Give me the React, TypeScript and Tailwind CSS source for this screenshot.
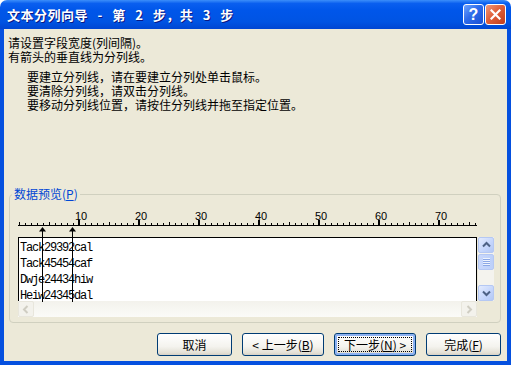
import React from 'react';

// Title bar buttons
const HelpButton = () => (
  <div className="flex h-[21px] w-[21px] items-center justify-center rounded-[3px] border border-white bg-[linear-gradient(135deg,#6FA4FF_0%,#2D6BEA_45%,#1A4FD4_100%)]">
    <span className="font-['Liberation_Sans',sans-serif] text-[16px] font-bold leading-none text-white">?</span>
  </div>
);

const CloseButton = () => (
  <div className="flex h-[21px] w-[21px] items-center justify-center rounded-[3px] border border-white bg-[linear-gradient(135deg,#F0997A_0%,#E0603A_45%,#C23D1C_100%)]">
    <svg width="11" height="11" viewBox="0 0 11 11">
      <path d="M1.5 1.5 L9.5 9.5 M9.5 1.5 L1.5 9.5" stroke="white" strokeWidth={2.2} strokeLinecap="square" />
    </svg>
  </div>
);

// Scrollbar bits
const Chevron = ({ dir, color }: { dir: 'up' | 'down' | 'left' | 'right'; color: string }) => {
  const d = {
    up: 'M1 5.5 L4.5 2 L8 5.5',
    down: 'M1 2.5 L4.5 6 L8 2.5',
    left: 'M5.5 1 L2 4.5 L5.5 8',
    right: 'M2.5 1 L6 4.5 L2.5 8',
  }[dir];
  return (
    <svg width="9" height="9" viewBox="0 0 9 9">
      <path d={d} fill="none" stroke={color} strokeWidth={2} />
    </svg>
  );
};

const ScrollBtn = ({ dir }: { dir: 'up' | 'down' }) => (
  <div className="flex h-[16px] w-[16px] items-center justify-center rounded-[2px] border border-[#B5C8F3] bg-[linear-gradient(to_bottom_right,#E3EBFE_0%,#C4D5FC_60%,#B3C8F5_100%)]">
    <Chevron dir={dir} color="#4D6185" />
  </div>
);

const DisabledBtn = ({ dir }: { dir: 'left' | 'right' }) => (
  <div className="flex h-[16px] w-[16px] items-center justify-center rounded-[2px] border border-[#E8E6DC] bg-[#F3F2EC]">
    <Chevron dir={dir} color="#CFCDC2" />
  </div>
);

// Column ruler
function Ruler() {
  const ticks: React.ReactNode[] = [];
  for (let p = 0; p <= 76; p++) {
    const x = 1 + 6 * p;
    if (p % 10 === 0 && p > 0) ticks.push(<rect key={p} x={x - 1} y={14} width={2} height={5} />);
    else if (p % 5 === 0) ticks.push(<rect key={p} x={x} y={16} width={1} height={3} />);
    else ticks.push(<rect key={p} x={x} y={17} width={1} height={2} />);
  }
  return (
    <svg width="460" height="22" viewBox="0 0 460 22" className="block">
      <rect x={0} y={19} width={459} height={1} fill="black" />
      <g fill="black">{ticks}</g>
      {[10, 20, 30, 40, 50, 60, 70].map((n) => (
        <text key={n} x={6 * n - 3} y={14} fontSize={11} fontFamily="Liberation Sans, sans-serif" fill="black">
          {n}
        </text>
      ))}
    </svg>
  );
}

const BreakArrow = ({ left }: { left: number }) => (
  <svg width="7" height="75" viewBox="0 0 7 75" className="absolute top-[21px]" style={{ left }}>
    <rect x={3} y={2} width={1} height={73} fill="black" />
    <polygon points="3.5,0 0,4.5 7,4.5" fill="black" />
  </svg>
);

const rows = ['Tack29392cal', 'Tack45454caf', 'Dwje24434hiw', 'Heiw24345dal'];

const WizardButton = ({ children, focused = false, width }: { children: React.ReactNode; focused?: boolean; width: string }) => (
  <button
    className={`relative flex h-[23px] ${width} items-center justify-center rounded-[3px] border border-[#003C74] bg-[linear-gradient(to_bottom,#FFFFFF_0%,#F4F3EE_60%,#E3E0D5_90%,#D6D0C5_100%)] text-[12px] leading-none text-black ${
      focused ? 'shadow-[inset_0_0_0_2px_#8DB2F2]' : ''
    }`}
  >
    {focused && <span className="absolute inset-[3px] border border-dotted border-black" />}
    <span className="relative">{children}</span>
  </button>
);

export default function App() {
  return (
    <div className="h-[365px] w-[511px] overflow-hidden bg-white font-['Noto_Sans_CJK_SC',sans-serif]">
      {/* Title bar */}
      <div className="flex h-[29px] items-center justify-between rounded-t-[7px] bg-[linear-gradient(to_bottom,#3C8EFA_0%,#0A5FEF_12%,#0056EA_35%,#0054E3_75%,#0046D2_100%)] pl-[7px] pr-[5px]">
        <span className="whitespace-pre text-[13px] font-bold leading-none tracking-[0.5px] text-white [text-shadow:1px_1px_0_#0A1883] [word-spacing:6px]">
          文本分列向导 - 第 2 步，共 3 步
        </span>
        <div className="flex gap-[1px]">
          <HelpButton />
          <CloseButton />
        </div>
      </div>

      {/* Client area */}
      <div className="flex h-[336px] flex-col border-x-4 border-b-4 border-[#0550DF] bg-[#ECE9D8] pt-[7px] text-[12px] leading-[14px] text-black">
        <div className="pl-[4px]">
          <div>请设置字段宽度(列间隔)。</div>
          <div>有箭头的垂直线为分列线。</div>
        </div>
        <div className="mt-[6px] pl-[23px]">
          <div>要建立分列线，请在要建立分列处单击鼠标。</div>
          <div>要清除分列线，请双击分列线。</div>
          <div>要移动分列线位置，请按住分列线并拖至指定位置。</div>
        </div>

        {/* Data preview group */}
        <fieldset className="ml-[5px] mt-[75px] w-[492px] rounded-[4px] border border-[#D0D0BF] pb-[5px]">
          <legend className="ml-[2px] px-[2px] leading-[14px] text-[#0046D5]">
            数据预览(<span className="underline">P</span>)
          </legend>
          <div className="relative ml-[8px] mt-[5px]">
            <Ruler />
            <BreakArrow left={21} />
            <BreakArrow left={51} />
            <div className="mt-[9px] grid grid-cols-[459px_16px] grid-rows-[64px_16px] gap-x-[1px]">
              <div className="border-x border-t border-black bg-white pt-[2px] font-['Liberation_Mono',monospace] text-[12px] leading-[16px] tracking-[-1.2px]">
                {rows.map((r) => (
                  <div key={r} className="pl-[1px]">{r}</div>
                ))}
              </div>
              <div className="flex flex-col justify-between bg-[#F4F3EE]">
                <ScrollBtn dir="up" />
                <div className="mb-auto mt-[1px] flex h-[16px] w-[16px] items-center justify-center rounded-[2px] border border-[#B5C8F3] bg-[linear-gradient(to_right,#C9D8FC_0%,#BCD0FA_100%)]">
                  <svg width="7" height="8" viewBox="0 0 7 8">
                    {[0, 2, 4, 6].map((y) => (
                      <rect key={y} x={0} y={y} width={7} height={1} fill="#EEF4FE" />
                    ))}
                    {[1, 3, 5, 7].map((y) => (
                      <rect key={y} x={0} y={y} width={7} height={1} fill="#8CA8E6" />
                    ))}
                  </svg>
                </div>
                <ScrollBtn dir="down" />
              </div>
              <div className="flex items-center justify-between bg-[linear-gradient(to_bottom,#F3F2EC_0%,#FBFBF8_100%)]">
                <DisabledBtn dir="left" />
                <DisabledBtn dir="right" />
              </div>
              <div />
            </div>
          </div>
        </fieldset>

        {/* Buttons */}
        <div className="mt-[10px] flex justify-end gap-[10px] pr-[6px]">
          <WizardButton width="w-[75px]">取消</WizardButton>
          <WizardButton width="w-[82px]">
            &lt; 上一步(<span className="underline">B</span>)
          </WizardButton>
          <WizardButton width="w-[82px]" focused>
            下一步(<span className="underline">N</span>) &gt;
          </WizardButton>
          <WizardButton width="w-[75px]">
            完成(<span className="underline">F</span>)
          </WizardButton>
        </div>
      </div>
    </div>
  );
}
